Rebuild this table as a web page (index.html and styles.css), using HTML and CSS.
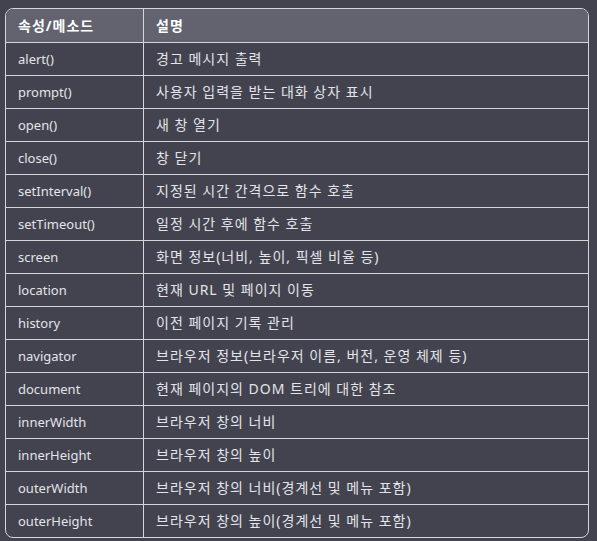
FILE: index.html
```html
<!DOCTYPE html>
<html lang="ko">
<head>
<meta charset="utf-8">
<link rel="stylesheet" href="styles.css">
</head>
<body>
<div class="wrap">
<table class="tbl">
<thead>
<tr><th class="c1">속성/메소드</th><th class="c2">설명</th></tr>
</thead>
<tbody>
<tr><td class="c1">alert()</td><td class="c2">경고 메시지 출력</td></tr>
<tr><td class="c1">prompt()</td><td class="c2">사용자 입력을 받는 대화 상자 표시</td></tr>
<tr><td class="c1">open()</td><td class="c2">새 창 열기</td></tr>
<tr><td class="c1">close()</td><td class="c2">창 닫기</td></tr>
<tr><td class="c1">setInterval()</td><td class="c2">지정된 시간 간격으로 함수 호출</td></tr>
<tr><td class="c1">setTimeout()</td><td class="c2">일정 시간 후에 함수 호출</td></tr>
<tr><td class="c1">screen</td><td class="c2">화면 정보(너비, 높이, 픽셀 비율 등)</td></tr>
<tr><td class="c1">location</td><td class="c2">현재 URL 및 페이지 이동</td></tr>
<tr><td class="c1">history</td><td class="c2">이전 페이지 기록 관리</td></tr>
<tr><td class="c1">navigator</td><td class="c2">브라우저 정보(브라우저 이름, 버전, 운영 체제 등)</td></tr>
<tr><td class="c1">document</td><td class="c2">현재 페이지의 DOM 트리에 대한 참조</td></tr>
<tr><td class="c1">innerWidth</td><td class="c2">브라우저 창의 너비</td></tr>
<tr><td class="c1">innerHeight</td><td class="c2">브라우저 창의 높이</td></tr>
<tr><td class="c1">outerWidth</td><td class="c2">브라우저 창의 너비(경계선 및 메뉴 포함)</td></tr>
<tr><td class="c1">outerHeight</td><td class="c2">브라우저 창의 높이(경계선 및 메뉴 포함)</td></tr>
</tbody>
</table>
</div>
</body>
</html>
```
FILE: styles.css
```css
html, body {
  margin: 0;
  padding: 0;
  background: #42434f;
}
.wrap {
  padding: 8px 8px 0 5px;
}
.tbl {
  width: 584px;
  border-collapse: separate;
  border-spacing: 0;
  border: 1px solid #d5d5dc;
  border-radius: 8px;
  overflow: hidden;
  font-family: "Noto Sans", "Noto Sans CJK KR", sans-serif;
  font-size: 13px;
  color: #e3e3e8;
}
.tbl th, .tbl td {
  padding: 0 12px;
  text-align: left;
  vertical-align: middle;
  box-sizing: border-box;
  line-height: 1;
}
.tbl th {
  background: #62636f;
  font-weight: bold;
  color: #ffffff;
  height: 33px;
}
.tbl td {
  border-top: 1px solid #d5d5dc;
  height: 33px;
}
.tbl .c1 {
  width: 138px;
  border-right: 1px solid #d5d5dc;
}
.tbl th.c1 {
  font-size: 14px;
  letter-spacing: 1px;
}
.tbl .c2 {
  font-size: 14px;
  letter-spacing: 1px;
}
```
